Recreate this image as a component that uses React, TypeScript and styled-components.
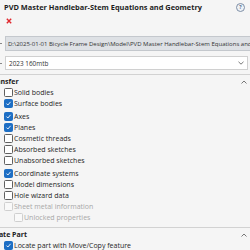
import React from "react";
import styled, { createGlobalStyle, css } from "styled-components";

const GlobalStyle = createGlobalStyle`
  html, body {
    margin: 0;
    padding: 0;
    background: #f5f5f5;
    overflow: hidden;
  }
  body {
    font-family: "Open Sans", "Noto Sans", sans-serif;
    font-size: 7px;
    color: #222;
  }
`;

const Panel = styled.div`
  width: 250px;
  height: 250px;
  overflow: hidden;
  background: #f5f5f5;
`;

const Header = styled.div`
  display: flex;
  align-items: center;
  justify-content: space-between;
  height: 14px;
  padding: 0 4px 0 4px;
`;

const Title = styled.div`
  font-weight: 700;
  font-size: 7.4px;
  color: #1e1e1e;
  white-space: nowrap;
`;

const Help = styled.div`
  width: 7px;
  height: 7px;
  border-radius: 50%;
  border: 1px solid #7f8fa6;
  background: #eef2f7;
  color: #5b6e8a;
  font-size: 5px;
  font-weight: 700;
  display: flex;
  align-items: center;
  justify-content: center;
  margin-right: 1px;
`;

const Actions = styled.div`
  height: 14px;
  display: flex;
  align-items: center;
  padding-left: 6px;
`;

const FieldRow = styled.div<{ $top: number }>`
  display: flex;
  align-items: center;
  margin-top: ${(p) => p.$top}px;
`;

const Tick = styled.div`
  width: 2px;
  height: 1px;
  background: #888;
  margin: 0 3px 0 0;
`;

const PathBox = styled.div`
  flex: 1;
  height: 13px;
  background: #dee1e5;
  border: 1px solid #c4c8cd;
  border-right: none;
  display: flex;
  align-items: center;
  padding-left: 2px;
  white-space: nowrap;
  overflow: hidden;
  font-size: 6px;
  color: #333;
`;

const Select = styled.div`
  flex: 1;
  height: 12px;
  background: #fff;
  border: 1px solid #d0d0d0;
  margin-right: 2px;
  display: flex;
  align-items: center;
  justify-content: space-between;
  padding: 0 3px 0 3px;
  font-size: 6.4px;
  color: #333;
`;

const Divider = styled.div<{ $top: number }>`
  height: 1px;
  background: #d2d2d2;
  margin-top: ${(p) => p.$top}px;
`;

const SectionHead = styled.div`
  display: flex;
  align-items: center;
  justify-content: space-between;
  height: 11px;
  margin-top: 1px;
  padding-right: 3px;
  font-weight: 700;
  font-size: 7px;
  color: #222;
  overflow: hidden;
`;

const SectionLabel = styled.span<{ $shift: number }>`
  margin-left: -${(p) => p.$shift}px;
  white-space: nowrap;
`;

const Row = styled.div<{ $indent?: number; $gap?: number }>`
  display: flex;
  align-items: center;
  height: 11px;
  padding-left: ${(p) => 4 + (p.$indent || 0)}px;
  margin-top: ${(p) => p.$gap || 0}px;
`;

const Box = styled.span<{ $checked?: boolean; $disabled?: boolean }>`
  box-sizing: border-box;
  width: 9px;
  height: 9px;
  border-radius: 1.5px;
  border: 1px solid #5f5f5f;
  background: #fff;
  display: flex;
  align-items: center;
  justify-content: center;
  margin-right: 1px;
  ${(p) =>
    p.$checked &&
    css`
      background: #1d6ec4;
      border-color: #1d6ec4;
    `}
  ${(p) =>
    p.$disabled &&
    css`
      border-color: #cfcfcf;
      background: #f9f9f9;
    `}
`;

const Label = styled.span<{ $disabled?: boolean }>`
  font-size: 7px;
  color: ${(p) => (p.$disabled ? "#a8a8a8" : "#262626")};
  white-space: nowrap;
`;

const Chevron = ({ up }: { up?: boolean }) => (
  <svg width="6" height="4" viewBox="0 0 6 4">
    <path
      d={up ? "M0.5 3.5 L3 1 L5.5 3.5" : "M0.5 0.8 L3 3.2 L5.5 0.8"}
      fill="none"
      stroke="#777"
      strokeWidth="1"
    />
  </svg>
);

const Check = ({ label, checked, disabled, indent, gap }: {
  label: string;
  checked?: boolean;
  disabled?: boolean;
  indent?: number;
  gap?: number;
}) => (
  <Row $indent={indent} $gap={gap}>
    <Box $checked={checked} $disabled={disabled}>
      {checked && (
        <svg width="7" height="7" viewBox="0 0 7 7">
          <path d="M1.5 3.6 L2.9 5 L5.6 1.8" fill="none" stroke="#fff" strokeWidth="0.9" />
        </svg>
      )}
    </Box>
    <Label $disabled={disabled}>{label}</Label>
  </Row>
);

export default function App() {
  return (
    <Panel>
      <GlobalStyle />
      <Header>
        <Title>PVD Master Handlebar-Stem Equations and Geometry</Title>
        <Help>?</Help>
      </Header>
      <Actions>
        <svg width="6" height="6" viewBox="0 0 6 6">
          <path d="M0.8 0.8 L5.2 5.2 M5.2 0.8 L0.8 5.2" stroke="#e0282e" strokeWidth="1.4" />
        </svg>
      </Actions>
      <FieldRow $top={8}>
        <Tick />
        <PathBox>D:\2025-01-01 Bicycle Frame Design\Model\PVD Master Handlebar-Stem Equations and Geometry</PathBox>
      </FieldRow>
      <FieldRow $top={5}>
        <Tick />
        <Select>
          <span>2023 160mtb</span>
          <Chevron />
        </Select>
      </FieldRow>
      <Divider $top={4} />
      <SectionHead>
        <SectionLabel $shift={11}>Transfer</SectionLabel>
        <Chevron up />
      </SectionHead>
      <Check label="Solid bodies" />
      <Check label="Surface bodies" checked />
      <Check label="Axes" checked gap={2} />
      <Check label="Planes" checked />
      <Check label="Cosmetic threads" />
      <Check label="Absorbed sketches" />
      <Check label="Unabsorbed sketches" />
      <Check label="Coordinate systems" checked gap={2} />
      <Check label="Model dimensions" />
      <Check label="Hole wizard data" />
      <Check label="Sheet metal information" disabled />
      <Check label="Unlocked properties" disabled indent={10} />
      <Divider $top={4} />
      <SectionHead>
        <SectionLabel $shift={13}>Locate Part</SectionLabel>
        <Chevron up />
      </SectionHead>
      <Check label="Locate part with Move/Copy feature" checked />
    </Panel>
  );
}
